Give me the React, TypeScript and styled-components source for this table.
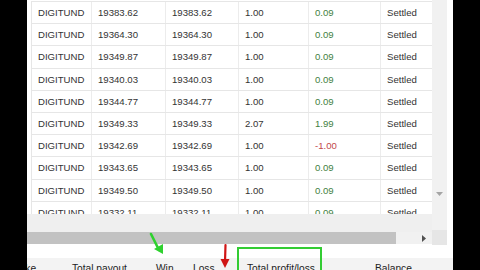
import { FC } from "react";
import styled, { createGlobalStyle } from "styled-components";

// #region styled
const GlobalStyle = createGlobalStyle`
  html, body {
    margin: 0;
    padding: 0;
    background: #000;
  }
`

const Frame = styled.div`
  position: relative;
  width: 480px;
  height: 270px;
  overflow: hidden;
  display: grid;
  grid-template-columns: 27px 426px 27px;
  background: #000;
  font-family: "Liberation Sans", Arial, sans-serif;
  color: #333;
`

const Content = styled.div`
  grid-column: 2;
  display: flex;
  flex-direction: column;
  background: #fff;
  overflow: hidden;
`

const Body = styled.div`
  display: flex;
  height: 245px;
`

const TableColumn = styled.div`
  width: 405px;
  display: flex;
  flex-direction: column;
`

const Viewport = styled.div`
  height: 214px;
  overflow: hidden;
  padding-left: 4px;
  padding-top: 1px;
  box-sizing: border-box;
`

const Row = styled.div`
  display: grid;
  grid-template-columns: 60px 74px 73px 70px 72px 60px;
  height: 22.2px;
  border-top: 1px solid #e6e6e6;
  box-sizing: border-box;
  font-size: 9.6px;
  border-left: 1px solid #e6e6e6;
`

const Cell = styled.div<{ tone?: "win" | "loss" }>`
  display: flex;
  align-items: center;
  padding-left: 6px;
  border-right: 1px solid #ececec;
  white-space: nowrap;
  color: ${p => p.tone === "win" ? "#3f7f3f" : p.tone === "loss" ? "#c2484a" : "#333"};
`

const GrayBand = styled.div`
  height: 18px;
  background: #efefef;
`

const HScroll = styled.div`
  height: 12px;
  display: flex;
  background: #f1f1f1;
`

const HThumb = styled.div`
  width: 369px;
  background: #c2c2c2;
`

const HArrow = styled.div`
  flex: 1;
  display: flex;
  align-items: center;
  justify-content: flex-end;
  padding-right: 6px;
`

const VScroll = styled.div`
  width: 15px;
  display: flex;
  flex-direction: column;
  justify-content: flex-end;
  background: #f1f1f1;
`

const VArrow = styled.div`
  height: 16px;
  display: flex;
  justify-content: center;
  align-items: flex-start;
  margin-bottom: 22px;
`

const Corner = styled.div`
  height: 15px;
  background: #e6e6e6;
`

const Gutter = styled.div`
  width: 6px;
  background: #fff;
`

const Spacer = styled.div`
  height: 13px;
`

const Summary = styled.div`
  height: 12px;
  display: grid;
  grid-template-columns: 62px 84px 37px 54px 128px auto;
  margin-left: -17px;
  background: #f3f3f3;
  font-size: 10.2px;
  line-height: 21px;
  white-space: nowrap;
  color: #222;
`

const Label = styled.div`
  overflow: visible;
`

const Highlight = styled.div`
  position: absolute;
  left: 237px;
  top: 247px;
  width: 85px;
  height: 30px;
  border: 2px solid #33cc33;
  box-sizing: border-box;
`

const Mark = styled.svg`
  position: absolute;
  overflow: visible;
`
// #endregion

interface ITrade {
  entry: string
  exit: string
  stake: string
  profit: string
}

const trades: ITrade[] = [
  { entry: "19383.62", exit: "19383.62", stake: "1.00", profit: "0.09" },
  { entry: "19364.30", exit: "19364.30", stake: "1.00", profit: "0.09" },
  { entry: "19349.87", exit: "19349.87", stake: "1.00", profit: "0.09" },
  { entry: "19340.03", exit: "19340.03", stake: "1.00", profit: "0.09" },
  { entry: "19344.77", exit: "19344.77", stake: "1.00", profit: "0.09" },
  { entry: "19349.33", exit: "19349.33", stake: "2.07", profit: "1.99" },
  { entry: "19342.69", exit: "19342.69", stake: "1.00", profit: "-1.00" },
  { entry: "19343.65", exit: "19343.65", stake: "1.00", profit: "0.09" },
  { entry: "19349.50", exit: "19349.50", stake: "1.00", profit: "0.09" },
  { entry: "19332.11", exit: "19332.11", stake: "1.00", profit: "0.09" },
]

const App: FC = () => {
  return (
    <>
      <GlobalStyle />
      <Frame>
        <Content>
          <Body>
            <TableColumn>
              <Viewport>
                {trades.map((t, i) => (
                  <Row key={i}>
                    <Cell>DIGITUND</Cell>
                    <Cell>{t.entry}</Cell>
                    <Cell>{t.exit}</Cell>
                    <Cell>{t.stake}</Cell>
                    <Cell tone={t.profit.startsWith("-") ? "loss" : "win"}>{t.profit}</Cell>
                    <Cell>Settled</Cell>
                  </Row>
                ))}
              </Viewport>
              <GrayBand />
              <HScroll>
                <HThumb />
                <HArrow>
                  <svg width="4" height="7" viewBox="0 0 4 7"><path d="M0 0 L4 3.5 L0 7 Z" fill="#505050" /></svg>
                </HArrow>
              </HScroll>
            </TableColumn>
            <VScroll>
              <VArrow>
                <svg width="7" height="4" viewBox="0 0 7 4"><path d="M0 0 L7 0 L3.5 4 Z" fill="#a5a5a5" /></svg>
              </VArrow>
              <Corner />
            </VScroll>
            <Gutter />
          </Body>
          <Spacer />
          <Summary>
            <Label>Stake</Label>
            <Label>Total payout</Label>
            <Label>Win</Label>
            <Label>Loss</Label>
            <Label>Total profit/loss</Label>
            <Label>Balance</Label>
          </Summary>
        </Content>
        <Highlight />
        <Mark style={{ left: 146, top: 232 }} width="20" height="26" viewBox="0 0 20 26">
          <line x1="5" y1="2" x2="13" y2="18" stroke="#2fd12f" strokeWidth="2.6" strokeLinecap="round" />
          <path d="M8 17 L17 22 L17 12 Z" fill="#2fd12f" />
        </Mark>
        <Mark style={{ left: 219, top: 244 }} width="12" height="26" viewBox="0 0 12 26">
          <line x1="6.5" y1="1" x2="6" y2="18" stroke="#d01515" strokeWidth="2.2" strokeLinecap="round" />
          <path d="M1.5 15 L10.5 15 L6 24 Z" fill="#d01515" />
        </Mark>
      </Frame>
    </>
  );
}

export default App;
